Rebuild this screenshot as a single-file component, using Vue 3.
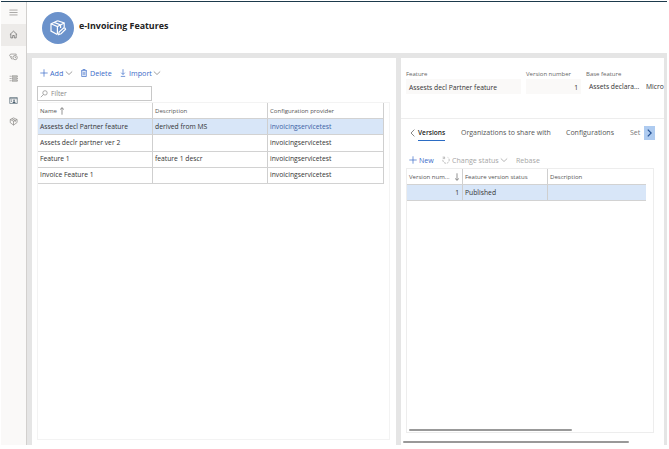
<script setup>
const features = [
  { name: 'Assests decl Partner feature', description: 'derived from MS', provider: 'invoicingservicetest' },
  { name: 'Assets declr partner ver 2', description: '', provider: 'invoicingservicetest' },
  { name: 'Feature 1', description: 'feature 1 descr', provider: 'invoicingservicetest' },
  { name: 'Invoice Feature 1', description: '', provider: 'invoicingservicetest' },
]
</script>

<template>
  <div class="page">
    <nav class="rail">
      <div class="rail-item menu">
        <svg viewBox="0 0 10 10"><path d="M.5 2.3h9M.5 5h9M.5 7.7h9" /></svg>
      </div>
      <div class="rail-item active">
        <svg viewBox="0 0 10 10"><path d="M1 5 5 1.3 9 5M2 4.4v4.4h2.1V6.1h1.8v2.7H8V4.4" /></svg>
      </div>
      <div class="rail-item">
        <svg viewBox="0 0 10 10"><path d="M3.5 5.3H1.7L.7 3.8l1-1.5H8v1M1.8 5.5 3 7.8h1" /><circle cx="6.8" cy="6.2" r="2.4" /><path d="M6.8 4.8v1.5h1.1" /></svg>
      </div>
      <div class="rail-item">
        <svg viewBox="0 0 10 10"><path d="M.7 2.5h1.4M.7 5h1.4M.7 7.5h1.4M3.3 2h6v1.2h-6zM3.3 4.4h6v1.2h-6zM3.3 6.8h6V8h-6z" /></svg>
      </div>
      <div class="rail-item dark">
        <svg viewBox="0 0 10 10"><path d="M.8 1.7h8.4v6.6H.8zM.8 3h8.4M2 4.5h1.4M2 6h1.4" /><circle class="solid" cx="5.6" cy="4.8" r=".9" /><path class="solid" d="M4 7.7q0-2 1.6-2t1.7 2z" /></svg>
      </div>
      <div class="rail-item">
        <svg viewBox="0 0 10 10"><path d="M5 1 9 2.8v3.3L5 9 1.4 6.3V2.8zM1.4 2.8 5 4.6l4-1.8M5 4.6V9M3.2 1.9l3.7 1.8v2" /></svg>
      </div>
    </nav>

    <div class="main">
      <header class="header">
        <div class="logo">
          <svg viewBox="0 0 18 18">
            <path d="M8.6 1.7 15.2 4v4.4M8.6 1.7 2 4.8v7.3l6.2 3.4M2 4.8l6.4 2.7L15.2 4M8.4 7.5v8M5.1 3.4l6.5 2.5v3" />
            <path d="m9.6 15.6.5-2.6 4.7-4.2q1.6-.2 1.8 1.4l-4.5 4.5z" />
          </svg>
        </div>
        <h1>e-Invoicing Features</h1>
      </header>

      <div class="panels">
        <section class="left">
          <div class="toolbar">
            <svg class="ic" viewBox="0 0 8 8"><path d="M4 .3v7.4M.3 4h7.4" /></svg>
            <span class="t-add">Add</span>
            <svg class="chev" viewBox="0 0 8 8"><path d="m.8 2.5 3.2 3 3.2-3" /></svg>
            <svg class="ic bin" viewBox="0 0 8 8"><path d="M1 1.7h6M2.9 1.5V.5h2.2v1M1.7 1.8v5.7h4.6V1.8M3.2 3v3.3M4.8 3v3.3" /></svg>
            <span class="t-del">Delete</span>
            <svg class="ic down" viewBox="0 0 8 8"><path d="M4 .2v5.2M2.2 3.7 4 5.5l1.8-1.8M1.8 7.4h4.4" /></svg>
            <span class="t-imp">Import</span>
            <svg class="chev" viewBox="0 0 8 8"><path d="m.8 2.5 3.2 3 3.2-3" /></svg>
          </div>
          <div class="filter">
            <svg viewBox="0 0 8 8"><circle cx="5" cy="2.9" r="2.2" /><path d="M3.4 4.6.8 7.2" /></svg>
            <span>Filter</span>
          </div>
          <div class="grid">
            <div class="table">
              <div class="row head">
                <div><span class="h-name">Name</span><svg class="sort" viewBox="0 0 6 8"><path d="M3 7.7V.7M1 2.6 3 .7l2 1.9" /></svg></div>
                <div><span>Description</span></div>
                <div><span>Configuration provider</span></div>
              </div>
              <div v-for="(f, i) in features" :key="f.name" class="row" :class="{ selected: i === 0 }">
                <div>{{ f.name }}</div>
                <div>{{ f.description }}</div>
                <div class="provider">{{ f.provider }}</div>
              </div>
            </div>
          </div>
        </section>

        <section class="right">
          <div class="fields">
            <div class="field f1"><label>Feature</label><div class="value">Assests decl Partner feature</div></div>
            <div class="field f2"><label>Version number</label><div class="value">1</div></div>
            <div class="field f3"><label>Base feature</label><div class="value">Assets declara...</div></div>
            <div class="field f4"><label>&nbsp;</label><div class="value">Micro</div></div>
          </div>
          <div class="tabs">
            <svg class="prev" viewBox="0 0 5 8"><path d="M4.4.6 1 4l3.4 3.4" /></svg>
            <span class="tab current">Versions</span>
            <span class="tab orgs">Organizations to share with</span>
            <span class="tab confs">Configurations</span>
            <span class="tab set">Set</span>
            <span class="next"><svg viewBox="0 0 5 8"><path d="M.8.6 4.2 4 .8 7.4" /></svg></span>
          </div>
          <div class="toolbar vtools">
            <svg class="ic" viewBox="0 0 8 8"><path d="M4 .3v7.4M.3 4h7.4" /></svg>
            <span class="t-new">New</span>
            <svg class="ic spin" viewBox="0 0 8 8"><path d="M2.6 1.1H.6M2.6 1.1v2" /><path class="dashed" d="M2.4 1.3a3.2 3.2 0 1 0 3.4.1" /></svg>
            <span class="t-chg">Change status</span>
            <svg class="chev" viewBox="0 0 8 8"><path d="m.8 2.5 3.2 3 3.2-3" /></svg>
            <span class="t-reb">Rebase</span>
          </div>
          <div class="vgrid">
            <div class="vrow head">
              <div><span>Version num...</span><svg class="sort" viewBox="0 0 6 8"><path d="M3 .3v7M1 5.4l2 1.9 2-1.9" /></svg></div>
              <div><span>Feature version status</span></div>
              <div><span>Description</span></div>
            </div>
            <div class="vrow selected">
              <div>1</div>
              <div>Published</div>
              <div></div>
            </div>
            <div class="bar inner"></div>
          </div>
          <div class="bar outer"></div>
        </section>
      </div>
    </div>
  </div>
</template>

<style>
body {
  margin: 0;
  background: #fff;
  overflow: hidden;
}
</style>

<style scoped>
* {
  box-sizing: border-box;
}
.page {
  width: 667px;
  height: 445px;
  padding: 1px 0 0 1px;
  display: flex;
  position: relative;
  font: 6.75px/10px "Open Sans", "Noto Sans", sans-serif;
  color: #333;
  white-space: nowrap;
}
.page::before {
  content: "";
  position: absolute;
  left: 1px;
  right: 0;
  top: 1px;
  height: 1px;
  background: #1d3a4c;
}
svg {
  display: block;
  flex: none;
  fill: none;
  stroke: currentColor;
  stroke-width: 0.7;
}
.rail {
  width: 26px;
  padding-top: 1px;
  background: #faf9f8;
  border-right: 1px solid #d2d0ce;
  color: #7c7a78;
  flex: none;
}
.rail-item {
  height: 21.8px;
  display: flex;
  align-items: center;
  justify-content: center;
}
.rail-item svg {
  width: 9px;
  height: 9px;
}
.rail-item.active {
  background: #edebe9;
  color: #555;
}
.rail-item.dark {
  color: #4d6170;
}
.solid {
  fill: currentColor;
  stroke: none;
}
.main {
  flex: 1;
  min-width: 0;
  padding-top: 1px;
  display: flex;
  flex-direction: column;
}
.header {
  height: 51px;
  background: #fff;
  display: flex;
  padding-left: 15px;
}
.logo {
  width: 32px;
  height: 32px;
  margin-top: 10px;
  border-radius: 50%;
  background: #6b92cb;
  color: #fff;
  display: flex;
  align-items: center;
  justify-content: center;
}
.logo svg {
  width: 18px;
  height: 18px;
  stroke-width: 1.2;
}
h1 {
  margin: 17px 0 0 5px;
  font-size: 8.9px;
  line-height: 14px;
  font-weight: 700;
  color: #222;
}
.panels {
  flex: 1;
  min-height: 0;
  display: flex;
  gap: 5px;
  padding: 5px 3px 0 5px;
  background: #e5e5e5;
}
.left {
  width: 364px;
  background: #fff;
  padding: 8px 6px 5px 5px;
  display: flex;
  flex-direction: column;
  flex: none;
}
.toolbar {
  height: 14px;
  display: flex;
  align-items: center;
  padding-left: 3px;
  font-size: 7.2px;
  color: #3b6bc9;
}
.ic {
  width: 8px;
  height: 8px;
}
.chev {
  width: 8px;
  height: 8px;
  color: #777;
}
.t-add { width: 15px; margin-left: 2px; }
.bin { margin-left: 7px; }
.t-del { width: 22px; margin-left: 2px; }
.down { margin-left: 7px; }
.t-imp { width: 24px; margin-left: 2px; }
.filter {
  width: 115px;
  height: 15px;
  margin-top: 6px;
  border: 1px solid #c8c8c8;
  display: flex;
  align-items: center;
  padding: 1px 0 0 2px;
  gap: 3px;
  color: #888;
}
.filter svg {
  width: 8px;
  height: 8px;
}
.grid {
  flex: 1;
  margin-top: 1px;
  border: 1px solid #f3f3f3;
}
.table {
  width: 346px;
  border-right: 1px solid #cfcfcf;
}
.row {
  display: grid;
  grid-template-columns: 115px 115px 1fr;
  height: 16.2px;
  border-bottom: 1px solid #d2d2d2;
}
.row > div,
.vrow > div {
  display: flex;
  align-items: center;
  padding-left: 2px;
  border-right: 1px solid #cfcfcf;
}
.row > div:last-child {
  border-right: 0;
}
.head {
  color: #555;
  font-size: 6.05px;
}
.head .sort {
  width: 6px;
  height: 8px;
  color: #666;
}
.h-name { margin-right: 2px; }
.row.selected,
.vrow.selected {
  background: #d8e6f8;
}
.selected .provider {
  color: #3b62a5;
}
.right {
  flex: 1;
  min-width: 0;
  background: #fff;
  overflow: hidden;
  display: flex;
  flex-direction: column;
}
.fields {
  height: 61px;
  padding: 11px 0 0 5px;
  border-bottom: 1px solid #ededed;
  display: flex;
}
.field {
  flex: none;
}
.field label {
  display: block;
  font-size: 6px;
  color: #666;
}
.value {
  height: 15px;
  background: #faf9f8;
  display: flex;
  align-items: center;
  padding: 2px 3px 0;
}
.f1 { width: 115px; margin-right: 5px; }
.f2 { width: 55px; margin-right: 5px; }
.f2 .value { justify-content: flex-end; }
.f3 { width: 57px; }
.f3 .value,
.f4 .value {
  padding-top: 0;
  background: none;
}
.f4 .value { padding-right: 0; }
.tabs {
  height: 28px;
  display: flex;
  align-items: center;
  padding-left: 9px;
  font-size: 7px;
  color: #555;
}
.prev {
  width: 5px;
  height: 8px;
  margin-right: 3px;
}
.tab {
  flex: none;
  height: 15px;
  line-height: 13px;
}
.current {
  width: 27px;
  border-bottom: 1.5px solid #2b6cc4;
  color: #222;
  font-weight: 600;
  font-size: 6.6px;
}
.orgs { width: 89px; margin-left: 16px; }
.confs { width: 48px; margin-left: 16px; }
.set { width: 13px; margin-left: 16px; color: #777; }
.next {
  width: 11px;
  height: 14px;
  margin-left: 1px;
  background: #aecbf0;
  color: #234f91;
  display: flex;
  align-items: center;
  justify-content: center;
}
.next svg {
  width: 5px;
  height: 8px;
  stroke-width: 1.2;
}
.vtools {
  margin-top: 6px;
  padding-left: 8px;
  font-size: 7.05px;
  color: #a6a6a6;
}
.vtools .ic:first-child,
.t-new { color: #3b6bc9; }
.t-new { width: 15px; margin-left: 2px; }
.spin { margin-left: 8px; }
.dashed { stroke-dasharray: 2.2 0.8; }
.t-chg { width: 48px; margin-left: 2px; }
.t-reb { margin-left: 8px; }
.vtools .chev { color: #999; }
.vgrid {
  width: 248px;
  height: 265px;
  margin: 1px 0 0 5px;
  border: 1px solid #ededed;
  display: flex;
  flex-direction: column;
  flex: none;
}
.vrow {
  width: 239px;
  height: 16px;
  display: grid;
  grid-template-columns: 56px 85px 1fr;
  border-bottom: 1px solid #d2d2d2;
}
.vrow > div:last-child {
  border-right: 0;
}
.vrow > div:first-child {
  justify-content: space-between;
  padding-right: 2px;
}
.vrow.selected > div {
  padding-top: 1px;
}
.vrow.selected > div:first-child {
  justify-content: flex-end;
  padding-right: 3px;
}
.bar {
  height: 2px;
  border-radius: 1px;
  background: #999;
}
.inner {
  width: 163px;
  margin: auto 0 1px 2px;
}
.outer {
  width: 226px;
  margin: 8px 0 0 2px;
}
</style>
